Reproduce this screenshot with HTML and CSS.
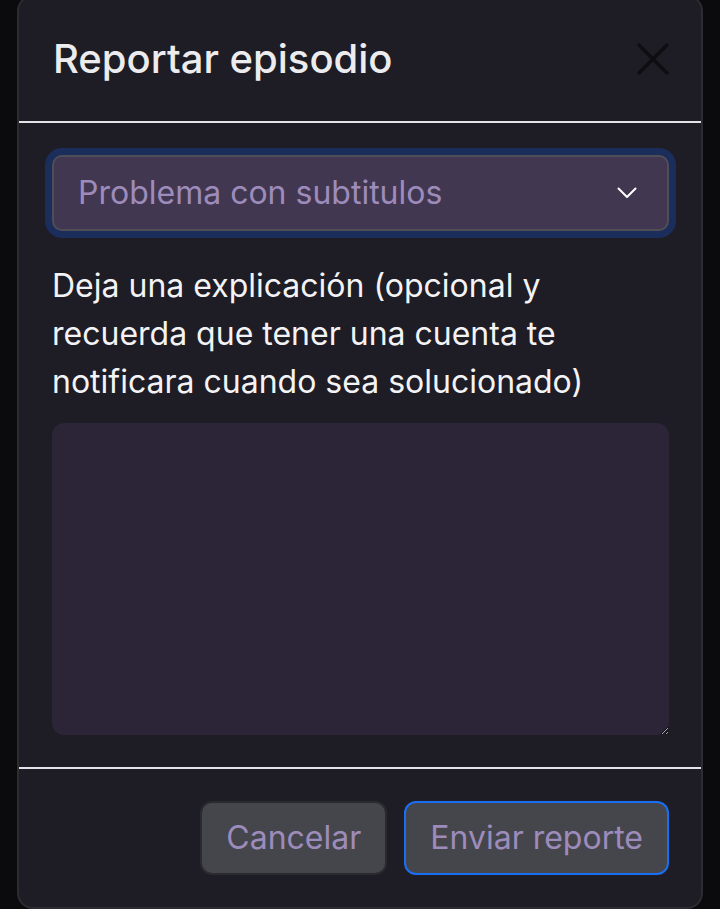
FILE: index.html
```html
<!DOCTYPE html>
<html lang="es">
<head>
<meta charset="utf-8">
<title>Reportar episodio</title>
<link rel="stylesheet" href="styles.css">
</head>
<body>
<div class="modal">
  <div class="modal-header">
    <h5 class="modal-title">Reportar episodio</h5>
    <button class="btn-close" aria-label="Cerrar">
      <svg viewBox="0 0 32 32" width="32" height="32"><path d="M2 2L30 30M30 2L2 30" stroke="#0e0e12" stroke-width="3.2" stroke-linecap="round"/></svg>
    </button>
  </div>
  <div class="modal-body">
    <div class="select">
      <span class="select-text">Problema con subtitulos</span>
      <svg class="chevron" viewBox="0 0 20 12" width="20" height="12"><path d="M1.5 1.5L10 10L18.5 1.5" fill="none" stroke="#ffffff" stroke-width="2" stroke-linecap="round" stroke-linejoin="round"/></svg>
    </div>
    <label class="label">Deja una explicación (opcional y recuerda que tener una cuenta te notificara cuando sea solucionado)</label>
    <textarea class="textarea"></textarea>
  </div>
  <div class="modal-footer">
    <button class="btn btn-cancel">Cancelar</button>
    <button class="btn btn-send">Enviar reporte</button>
  </div>
</div>
</body>
</html>
```
FILE: styles.css
```css
html, body {
  margin: 0;
  padding: 0;
  background: #0b0b0e;
  height: 909px;
  overflow: hidden;
  font-family: Inter, Roboto, sans-serif;
}
.modal {
  margin: -5px 17px 0 17px;
  background: #1e1c24;
  border: 2px solid #2d2d31;
  border-radius: 16px;
  display: flex;
  flex-direction: column;
}
.modal-header {
  display: flex;
  align-items: center;
  justify-content: space-between;
  padding: 32px 32px 32px 34px;
  border-bottom: 2px solid #e4e4e8;
}
.modal-title {
  margin: 0;
  font-size: 40px;
  line-height: 60px;
  font-weight: 500;
  color: #ececef;
}
.btn-close {
  background: none;
  border: 0;
  padding: 0;
  width: 32px;
  height: 32px;
  display: flex;
}
.modal-body {
  padding: 32px 32px 32px 33px;
  display: flex;
  flex-direction: column;
}
.select {
  display: flex;
  align-items: center;
  justify-content: space-between;
  height: 72px;
  padding: 0 30px 0 24px;
  background: #423750;
  border: 2px solid #4f4d56;
  border-radius: 10px;
  box-shadow: 0 0 0 7px #1b2e5b;
}
.select-text {
  font-size: 32px;
  line-height: 48px;
  color: #9d8cbb;
}
.chevron {
  display: block;
}
.label {
  margin-top: 31px;
  margin-bottom: 17px;
  font-size: 32px;
  line-height: 48px;
  color: #f3f3f5;
}
.textarea {
  height: 312px;
  box-sizing: border-box;
  background: #2b2537;
  border: 0;
  border-radius: 12px;
  resize: vertical;
  margin: 0;
  width: 100%;
  font-family: inherit;
}
.modal-footer {
  display: flex;
  justify-content: flex-end;
  gap: 17px;
  padding: 32px 32px 32px 32px;
  border-top: 2px solid #e4e4e8;
}
.btn {
  height: 74px;
  padding: 0 24px;
  font-family: inherit;
  font-size: 32px;
  line-height: 48px;
  color: #9d8cbb;
  background: #45464c;
  border-radius: 12px;
}
.btn-cancel {
  border: 2px solid #2a2b2f;
}
.btn-send {
  border: 2px solid #1a6ef2;
}
```
